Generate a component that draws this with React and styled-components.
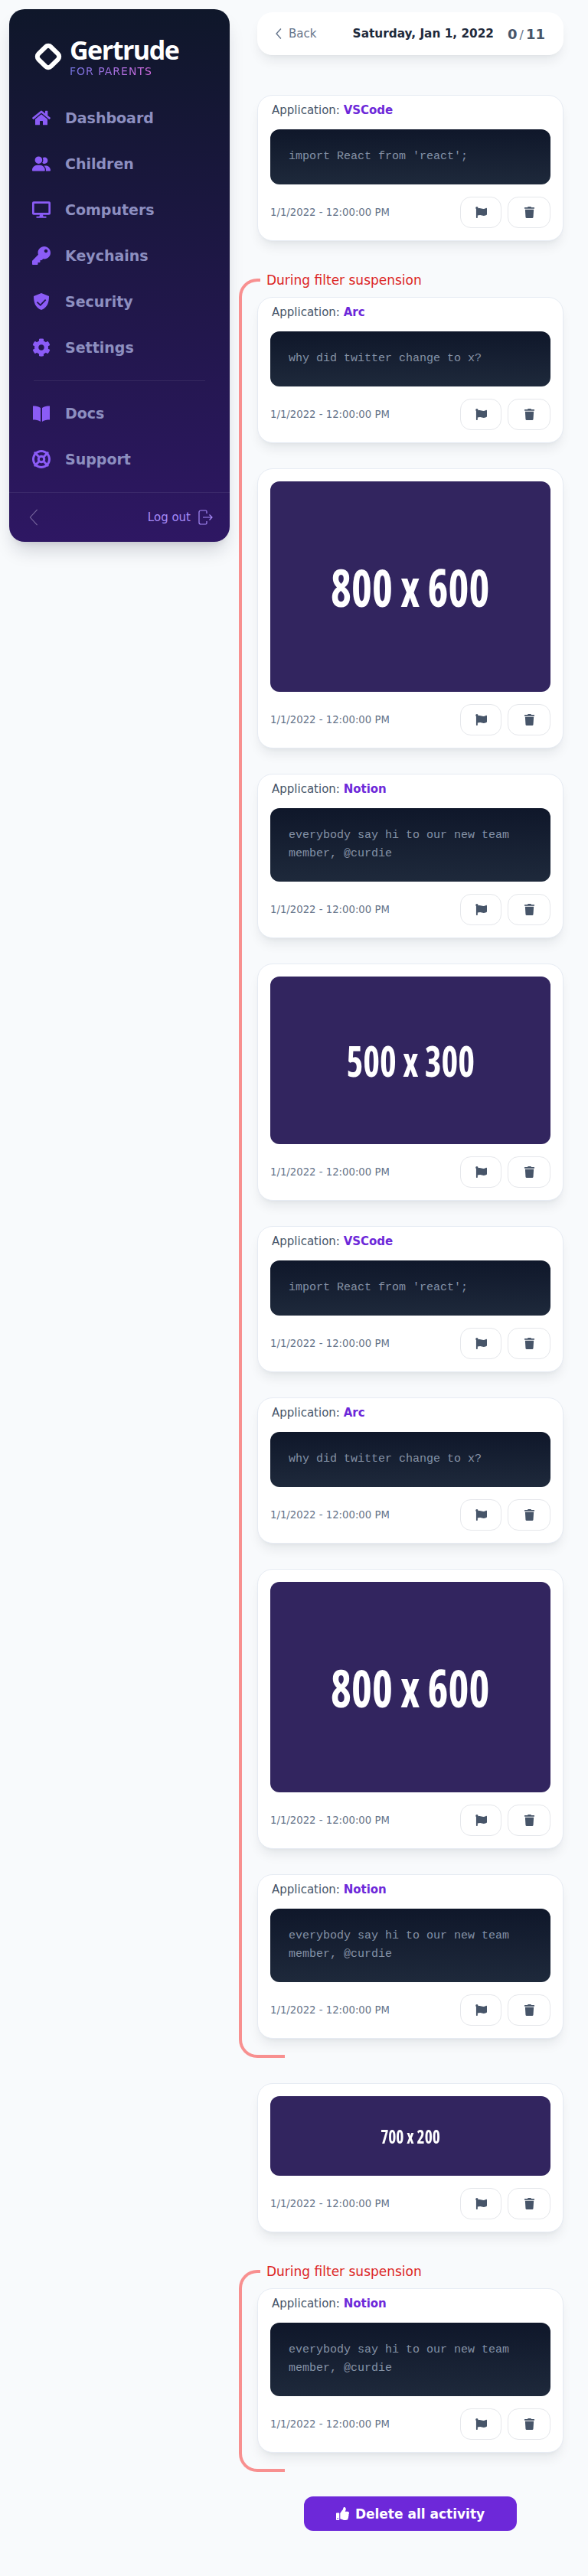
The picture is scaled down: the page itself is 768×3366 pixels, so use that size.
import React from "react";
import styled, { createGlobalStyle } from "styled-components";
import { FaHome, FaDesktop, FaKey, FaCog, FaFlag, FaTrash, FaThumbsUp } from "react-icons/fa";
import { FaUserGroup, FaLifeRing } from "react-icons/fa6";

const GlobalStyle = createGlobalStyle`
	* {
		box-sizing: border-box;
	}
	body {
		margin: 0;
		background: #f8fafc;
		font-family: "DejaVu Sans", sans-serif;
	}
`;

const Page = styled.div`
	display: flex;
	align-items: flex-start;
	width: 768px;
	min-height: 3366px;
	padding: 12px 32px 60px 12px;
	gap: 36px;
`;

const Sidebar = styled.aside`
	flex: 0 0 288px;
	height: 696px;
	display: flex;
	flex-direction: column;
	border-radius: 20px;
	background: linear-gradient(180deg, #0f172a, #2e1763);
	box-shadow: 0 16px 24px -6px rgba(15, 23, 42, 0.18), 0 6px 10px -6px rgba(15, 23, 42, 0.12);
`;

const Brand = styled.div`
	display: flex;
	align-items: center;
	gap: 7px;
	padding: 12px 0 0 30px;
	height: 112px;
`;

const BrandText = styled.div`
	display: flex;
	flex-direction: column;
`;

const BrandName = styled.div`
	font-family: "Open Sans", sans-serif;
	font-weight: 700;
	font-size: 34px;
	line-height: 36px;
	letter-spacing: -1.5px;
	color: #fff;
`;

const BrandSub = styled.div`
	align-self: flex-start;
	margin-top: 2px;
	font-size: 14px;
	line-height: 16px;
	letter-spacing: 1px;
	background: linear-gradient(90deg, #7274e0, #d56be0);
	-webkit-background-clip: text;
	background-clip: text;
	color: transparent;
`;

const Nav = styled.nav`
	display: flex;
	flex-direction: column;
`;

const NavItem = styled.a`
	display: flex;
	align-items: center;
	height: 60px;
	padding-left: 30px;
	font-size: 19px;
	font-weight: 700;
	color: #8d8fc0;
`;

const NavIcon = styled.span`
	flex: 0 0 43px;
	display: flex;
	color: #8b5cf6;
	font-size: 24px;
`;

const Divider = styled.div`
	height: 1px;
	margin: 13px 32px 12px;
	background: rgba(255, 255, 255, 0.08);
`;

const SideFooter = styled.div`
	margin-top: auto;
	height: 65px;
	display: flex;
	align-items: center;
	justify-content: space-between;
	padding: 0 22px 0 26px;
	border-top: 1px solid rgba(255, 255, 255, 0.08);
`;

const LogOut = styled.div`
	display: flex;
	align-items: center;
	gap: 10px;
	font-size: 15px;
	color: #a78bfa;
`;

const Main = styled.main`
	flex: 0 0 400px;
	display: flex;
	flex-direction: column;
	padding-top: 4px;
`;

const Header = styled.header`
	height: 56px;
	display: flex;
	align-items: center;
	padding: 0 24px;
	margin-bottom: 52px;
	border-radius: 20px;
	background: #fff;
	box-shadow: 0 10px 15px -3px rgba(15, 23, 42, 0.08), 0 4px 6px -4px rgba(15, 23, 42, 0.06);
`;

const BackLink = styled.div`
	display: flex;
	align-items: center;
	gap: 9px;
	font-size: 15px;
	color: #64748b;
`;

const DateLabel = styled.div`
	margin-left: auto;
	font-size: 15.3px;
	font-weight: 700;
	color: #1e293b;
`;

const Count = styled.div`
	margin-left: 18px;
	font-size: 18px;
	font-weight: 700;
	color: #475569;
	span {
		margin: 0 3px;
		font-weight: 400;
		font-size: 16px;
		color: #64748b;
	}
`;

const Feed = styled.div`
	display: flex;
	flex-direction: column;
	gap: 33px;
`;

const Group = styled.section`
	position: relative;
	display: flex;
	flex-direction: column;
	gap: 33px;
	padding: 24px 0 25px;
	margin-top: 16px;
	&::before,
	&::after {
		content: "";
		position: absolute;
		left: -24px;
		border-left: 4px solid #f89090;
	}
	&::before {
		top: 0;
		bottom: 40px;
		width: 24px;
		border-top: 4px solid #f89090;
		border-top-left-radius: 24px;
	}
	&::after {
		bottom: 0;
		height: 40px;
		width: 56px;
		border-bottom: 4px solid #f89090;
		border-bottom-left-radius: 24px;
	}
`;

const GroupLabel = styled.div`
	position: absolute;
	top: -10px;
	left: 12px;
	font-size: 17px;
	line-height: 24px;
	color: #dc2626;
`;

const Card = styled.article`
	padding: ${(p) => (p.$titled ? "7px" : "16px")} 16px 16px;
	border: 1px solid #e6ebf3;
	border-radius: 20px;
	background: #fff;
	box-shadow: 0 10px 15px -3px rgba(15, 23, 42, 0.08), 0 4px 6px -4px rgba(15, 23, 42, 0.06);
`;

const AppLine = styled.div`
	padding-left: 2px;
	margin-bottom: 13px;
	font-size: 15px;
	line-height: 24px;
	color: #475569;
	b {
		color: #6d28d9;
	}
`;

const Code = styled.div`
	padding: 24px;
	border-radius: 12px;
	background: linear-gradient(180deg, #0f172a, #1e293b);
	font-family: "Liberation Mono", monospace;
	font-size: 15px;
	line-height: 24px;
	color: #8592a6;
`;

const Shot = styled.div`
	display: flex;
	align-items: center;
	justify-content: center;
	aspect-ratio: ${(p) => p.$w} / ${(p) => p.$h};
	border-radius: 12px;
	background: #32255f;
	color: #fff;
	font-family: "Open Sans", sans-serif;
	font-weight: 700;
	font-stretch: 75%;
	font-size: ${(p) => p.$size}px;
	span {
		display: inline-block;
		transform: scaleX(0.845);
	}
`;

const CardFooter = styled.div`
	display: flex;
	align-items: center;
	margin-top: 16px;
`;

const Stamp = styled.div`
	margin-right: auto;
	font-size: 13.25px;
	color: #64748b;
`;

const IconButton = styled.button`
	display: flex;
	align-items: center;
	justify-content: center;
	width: ${(p) => p.$w}px;
	height: 41px;
	margin-left: 8px;
	padding: 0;
	border: 1px solid #e5e7eb;
	border-radius: 14px;
	background: #fff;
	color: #475569;
	font-size: 15px;
`;

const DeleteRow = styled.div`
	display: flex;
	justify-content: center;
	margin-top: 32px;
`;

const DeleteButton = styled.button`
	display: flex;
	align-items: center;
	justify-content: center;
	gap: 8px;
	width: 278px;
	height: 45px;
	border: 0;
	border-radius: 12px;
	background: #6d28d9;
	color: #fff;
	font-family: inherit;
	font-size: 17px;
	font-weight: 700;
`;

const Logo = () => (
	<svg width="42" height="42" viewBox="0 0 42 42">
		<rect
			x="9.500"
			y="9.500"
			width="23"
			height="23"
			rx="5"
			transform="rotate(45 21 21)"
			fill="none"
			stroke="#fff"
			strokeWidth="6"
		/>
	</svg>
);

const ShieldCheck = () => (
	<svg width="24" height="24" viewBox="0 0 24 24">
		<path
			fillRule="evenodd"
			fill="currentColor"
			d="M12 1l10 4c0 8-2 15-10 18C4 20 2 13 2 5l10-4zm5 8l-6.300 6.500L7 12l-1.200 1.300 5 4.700 7.500-7.700L17 9z"
		/>
	</svg>
);

const OpenBook = () => (
	<svg width="24" height="24" viewBox="0 0 24 24">
		<path
			fill="currentColor"
			d="M1 2.500c3.500 0 7.500.5 10 2.500v18c-2.500-2-6.500-2.500-10-2.500v-18zM23 2.500c-3.500 0-7.500.5-10 2.500v18c2.500-2 6.500-2.500 10-2.500v-18z"
		/>
	</svg>
);

const LogOutIcon = () => (
	<svg width="19" height="20" viewBox="0 0 19 20" fill="none" stroke="currentColor" strokeWidth="1.200">
		<path d="M11 5V2.500C11 1.500 10.500 1 9.500 1h-6C2.500 1 1 1.500 1 3v14c0 1.500 1.500 2 2.500 2h6c1 0 1.500-.5 1.500-1.500V15" />
		<path d="M6 10h12M14.500 6.500L18 10l-3.500 3.500" />
	</svg>
);

const Chevron = ({ width, height, color, weight }) => (
	<svg width={width} height={height} viewBox="0 0 12 24" fill="none" stroke={color} strokeWidth={weight}>
		<path d="M11 1L1 12l10 11" />
	</svg>
);

const mainNav = [
	["Dashboard", <FaHome key="i" />],
	["Children", <FaUserGroup key="i" />],
	["Computers", <FaDesktop key="i" />],
	["Keychains", <FaKey key="i" />],
	["Security", <ShieldCheck key="i" />],
	["Settings", <FaCog key="i" />],
];

const lowerNav = [
	["Docs", <OpenBook key="i" />],
	["Support", <FaLifeRing key="i" />],
];

const REACT = { app: "VSCode", code: "import React from 'react';" };
const ARC = { app: "Arc", code: "why did twitter change to x?" };
const NOTION = { app: "Notion", code: "everybody say hi to our new team member, @curdie" };

const firstGroup = [
	ARC,
	{ w: 800, h: 600, size: 68 },
	NOTION,
	{ w: 500, h: 300, size: 55 },
	REACT,
	ARC,
	{ w: 800, h: 600, size: 68 },
	NOTION,
];

const Item = ({ app, code, w, h, size }) => (
	<Card $titled={!!app}>
		{app ? (
			<>
				<AppLine>
					Application: <b>{app}</b>
				</AppLine>
				<Code>{code}</Code>
			</>
		) : (
			<Shot $w={w} $h={h} $size={size}>
				<span>
					{w} x {h}
				</span>
			</Shot>
		)}
		<CardFooter>
			<Stamp>1/1/2022 - 12:00:00 PM</Stamp>
			<IconButton $w={54}>
				<FaFlag />
			</IconButton>
			<IconButton $w={56}>
				<FaTrash />
			</IconButton>
		</CardFooter>
	</Card>
);

const NavList = ({ items }) => (
	<Nav>
		{items.map(([label, icon]) => (
			<NavItem key={label}>
				<NavIcon>{icon}</NavIcon>
				{label}
			</NavItem>
		))}
	</Nav>
);

export default function App() {
	return (
		<Page>
			<GlobalStyle />
			<Sidebar>
				<Brand>
					<Logo />
					<BrandText>
						<BrandName>Gertrude</BrandName>
						<BrandSub>FOR PARENTS</BrandSub>
					</BrandText>
				</Brand>
				<NavList items={mainNav} />
				<Divider />
				<NavList items={lowerNav} />
				<SideFooter>
					<Chevron width={12} height={22} color="#7a6a9f" weight={1.2} />
					<LogOut>
						Log out
						<LogOutIcon />
					</LogOut>
				</SideFooter>
			</Sidebar>
			<Main>
				<Header>
					<BackLink>
						<Chevron width={8} height={14} color="#64748b" weight={2.4} />
						Back
					</BackLink>
					<DateLabel>Saturday, Jan 1, 2022</DateLabel>
					<Count>
						0<span>/</span>11
					</Count>
				</Header>
				<Feed>
					<Item {...REACT} />
					<Group>
						<GroupLabel>During filter suspension</GroupLabel>
						{firstGroup.map((item, i) => (
							<Item key={i} {...item} />
						))}
					</Group>
					<Item w={700} h={200} size={25.5} />
					<Group>
						<GroupLabel>During filter suspension</GroupLabel>
						<Item {...NOTION} />
					</Group>
				</Feed>
				<DeleteRow>
					<DeleteButton>
						<FaThumbsUp />
						Delete all activity
					</DeleteButton>
				</DeleteRow>
			</Main>
		</Page>
	);
}
